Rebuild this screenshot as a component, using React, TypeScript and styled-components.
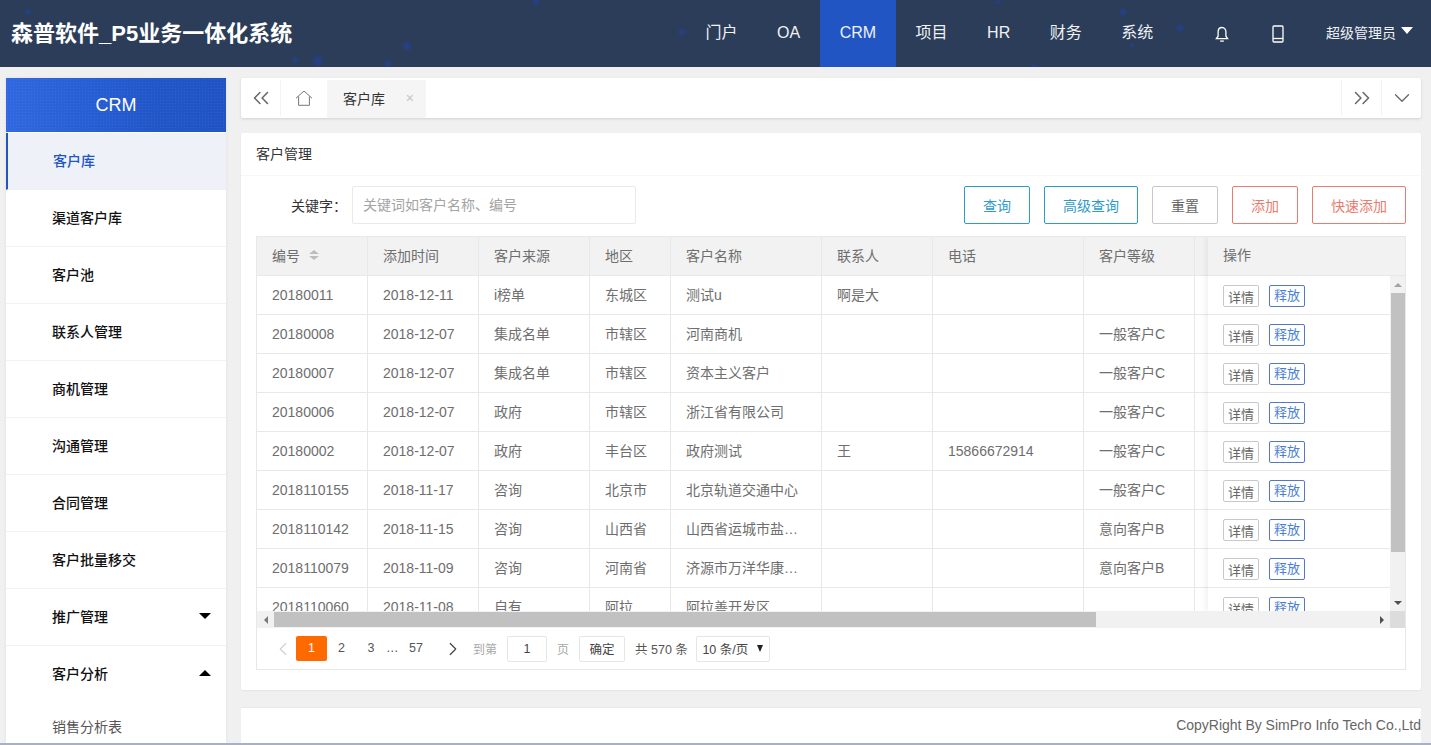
import styled, { createGlobalStyle } from "styled-components";
import { ChevronsLeft, ChevronsRight, ChevronDown, ChevronLeft, ChevronRight } from "lucide-react";

const GlobalStyle = createGlobalStyle`
    html, body {
        margin: 0;
        padding: 0;
        height: 100%;
        overflow: hidden;
    }
    * {
        box-sizing: border-box;
    }
    body {
        font-family: "Liberation Sans", "Noto Sans CJK SC", sans-serif;
        font-size: 14px;
        color: #6e6e6e;
        background: #f0f0f1;
    }
`;

const Page = styled.div`
    height: 745px;
    display: flex;
    flex-direction: column;
    overflow: hidden;
    border-bottom: 2px solid #a9b1c0;
`;

const dot = (x: number, y: number, r: number) =>
    `radial-gradient(circle ${r}px at ${x}px ${y}px, rgba(34, 66, 170, 0.75), rgba(34, 66, 170, 0) 100%)`;

const TopBar = styled.header`
    flex: none;
    height: 67px;
    display: flex;
    align-items: stretch;
    justify-content: space-between;
    background-color: #2b3d58;
    background-image: ${[
        dot(28, 12, 4),
        dot(295, 60, 4),
        dot(318, 61, 7),
        dot(388, 64, 5),
        dot(407, 46, 6),
        dot(536, 2, 5),
        dot(682, 32, 5),
        dot(998, 2, 3),
        dot(1034, 66, 4),
        dot(1123, 12, 5),
        dot(1132, 45, 3),
        dot(1180, 28, 5),
    ].join(", ")};
`;

const Brand = styled.div`
    padding-left: 11px;
    line-height: 67px;
    font-size: 22px;
    font-weight: 700;
    color: #fff;
`;

const TopNav = styled.nav`
    display: flex;
    align-items: stretch;
    color: #fff;
`;

const NavItem = styled.div<{ $active?: boolean }>`
    padding: 0 19.75px;
    line-height: 65px;
    font-size: 16px;
    color: #f0f2f5;
    background: ${(p) => (p.$active ? "#2155c3" : "transparent")};
`;

const NavIcons = styled.div`
    margin-left: 21px;
    display: flex;
`;

const NavIcon = styled.div`
    width: 56px;
    display: flex;
    align-items: center;
    justify-content: center;
    padding-top: 1px;
`;

const UserMenu = styled.div`
    display: flex;
    align-items: center;
    gap: 5px;
    padding: 0 18px 3px 20px;
    font-size: 14px;
    color: #f0f2f5;
`;

const UserCaret = styled.span`
    width: 0;
    height: 0;
    margin-bottom: 4px;
    border-left: 6.5px solid transparent;
    border-right: 6.5px solid transparent;
    border-top: 7px solid #fff;
`;

const Body = styled.div`
    flex: 1;
    min-height: 0;
    display: flex;
    gap: 15px;
    padding: 11px 10px 0 6px;
`;

const Sidebar = styled.aside`
    flex: none;
    width: 220px;
    background: #fff;
    overflow: hidden;
    box-shadow: 0 0 4px rgba(0, 0, 0, 0.06);
`;

const SideTitle = styled.div`
    height: 54px;
    margin-bottom: 1px;
    display: flex;
    align-items: center;
    justify-content: center;
    font-size: 18px;
    color: #fff;
    background-image: radial-gradient(rgba(255, 255, 255, 0.07) 0.5px, transparent 0.8px),
        linear-gradient(90deg, #2f68e0, #2156c8 70%, #2054c4);
    background-size: 3px 3px, 100% 100%;
`;

const SideItem = styled.div<{ $active?: boolean; $open?: boolean }>`
    height: 57px;
    display: flex;
    align-items: center;
    justify-content: space-between;
    padding: 0 15px 2px ${(p) => (p.$active ? "45px" : "46px")};
    font-size: 14px;
    font-weight: 500;
    color: ${(p) => (p.$active ? "#2155c3" : "#111")};
    background: ${(p) => (p.$active ? "#eef2f8" : "#fff")};
    border-left: ${(p) => (p.$active ? "2px solid #2155c3" : "none")};
    border-bottom: 1px solid ${(p) => (p.$open || p.$active ? "transparent" : "#f2f2f3")};
`;

const SideCaret = styled.span<{ $up?: boolean }>`
    width: 0;
    height: 0;
    border-left: 6px solid transparent;
    border-right: 6px solid transparent;
    border-top: ${(p) => (p.$up ? "none" : "6px solid #000")};
    border-bottom: ${(p) => (p.$up ? "6px solid #000" : "none")};
`;

const SideSubItem = styled.div`
    height: 50px;
    display: flex;
    align-items: center;
    padding: 0 0 5px 46px;
    font-size: 14px;
    color: #555;
`;

const Main = styled.main`
    flex: 1;
    min-width: 0;
    display: flex;
    flex-direction: column;
`;

const TabBar = styled.div`
    flex: none;
    height: 40px;
    display: flex;
    align-items: stretch;
    background: #fff;
    box-shadow: 0 1px 3px rgba(0, 0, 0, 0.13);
    border-radius: 2px;
`;

const TabButton = styled.div<{ $w: number; $left?: boolean; $right?: boolean }>`
    flex: none;
    width: ${(p) => p.$w}px;
    margin: 2px 0;
    display: flex;
    align-items: center;
    justify-content: center;
    color: #666;
    border-left: ${(p) => (p.$left ? "1px solid #f3f3f3" : "none")};
    border-right: ${(p) => (p.$right ? "1px solid #f3f3f3" : "none")};
`;

const Tab = styled.div`
    flex: none;
    width: 99px;
    margin: 2px 0 0 0;
    padding: 0 12px 3px 16px;
    display: flex;
    align-items: center;
    justify-content: space-between;
    background: #f5f5f6;
    font-size: 14px;
    color: #333;
`;

const TabClose = styled.span`
    font-size: 14px;
    color: #c4c4c4;
`;

const TabSpacer = styled.div`
    flex: 1;
`;

const Card = styled.section`
    flex: none;
    height: 557px;
    margin-top: 15px;
    background: #fff;
    box-shadow: 0 1px 2px rgba(0, 0, 0, 0.05);
    border-radius: 2px;
`;

const CardTitle = styled.div`
    height: 43px;
    padding: 0 15px;
    line-height: 43px;
    font-size: 14px;
    color: #333;
    border-bottom: 1px solid #f7f7f7;
`;

const CardBody = styled.div`
    padding: 10px 15px 0;
`;

const FilterRow = styled.div`
    display: flex;
    align-items: center;
    height: 38px;
`;

const FilterLabel = styled.label`
    width: 96px;
    flex: none;
    padding-right: 5px;
    text-align: right;
    font-size: 14px;
    color: #333;
`;

const SearchBox = styled.div`
    width: 284px;
    height: 38px;
    padding: 0 10px;
    line-height: 36px;
    font-size: 14px;
    color: #a4a4a4;
    border: 1px solid #e9e9e9;
    border-radius: 2px;
`;

const FilterActions = styled.div`
    margin-left: auto;
    display: flex;
    gap: 14px;
`;

const OutlineButton = styled.button<{ $tone: string; $line?: string; $w: number }>`
    width: ${(p) => p.$w}px;
    height: 38px;
    padding: 0;
    background: #fff;
    border: 1px solid ${(p) => p.$line ?? p.$tone};
    border-radius: 2px;
    font-family: inherit;
    font-size: 14px;
    color: ${(p) => p.$tone};
`;

const TableFrame = styled.div`
    margin-top: 12px;
    height: 434px;
    display: flex;
    flex-direction: column;
    border: 1px solid #e8e8ea;
`;

const Panes = styled.div`
    flex: none;
    height: 374px;
    display: flex;
    overflow: hidden;
`;

const ScrollPane = styled.div`
    flex: 1;
    min-width: 0;
    overflow: hidden;
`;

const FixedPane = styled.div`
    flex: none;
    width: 197px;
    display: flex;
    flex-direction: column;
    background: #fff;
    box-shadow: -3px 0 5px rgba(0, 0, 0, 0.05);
    position: relative;
`;

const HeadRow = styled.div`
    display: flex;
    width: max-content;
    height: 39px;
    background: #f2f2f3;
    border-bottom: 1px solid #e8e8ea;
`;

const HeadCell = styled.div<{ $w: number }>`
    flex: none;
    width: ${(p) => p.$w}px;
    padding: 0 15px 2px;
    display: flex;
    align-items: center;
    gap: 9px;
    font-size: 14px;
    color: #6e6e6e;
    border-right: 1px solid #e8e8ea;
`;

const FixedHead = styled.div`
    flex: none;
    height: 39px;
    padding: 0 15px;
    line-height: 37px;
    font-size: 14px;
    color: #6e6e6e;
    background: #f2f2f3;
    border-bottom: 1px solid #e8e8ea;
`;

const Row = styled.div`
    display: flex;
    width: max-content;
    height: 39px;
    border-bottom: 1px solid #e8e8ea;
`;

const Cell = styled.div<{ $w: number }>`
    flex: none;
    width: ${(p) => p.$w}px;
    padding: 0 15px;
    line-height: 38px;
    font-size: 14px;
    color: #6e6e6e;
    white-space: nowrap;
    overflow: hidden;
    border-right: 1px solid #e8e8ea;
`;

const FixedBody = styled.div`
    flex: 1;
    min-height: 0;
    display: flex;
`;

const ActionList = styled.div`
    flex: 1;
    min-width: 0;
`;

const ActionRow = styled.div`
    height: 39px;
    padding: 2px 15px 0;
    display: flex;
    align-items: center;
    gap: 10px;
    border-bottom: 1px solid #e8e8ea;
`;

const RowButton = styled.button<{ $primary?: boolean }>`
    width: 36px;
    height: 22px;
    padding: ${(p) => (p.$primary ? "0" : "3px 0 0")};
    background: #fff;
    border: 1px solid ${(p) => (p.$primary ? "#5577c8" : "#c9c9c9")};
    border-radius: 2px;
    font-family: inherit;
    font-size: 13px;
    line-height: 18px;
    color: ${(p) => (p.$primary ? "#4b7fd6" : "#666")};
`;

const VScroll = styled.div`
    flex: none;
    width: 15px;
    display: flex;
    flex-direction: column;
    align-items: center;
    background: #f1f1f1;
`;

const VArrow = styled.div`
    flex: none;
    height: 17px;
    display: flex;
    align-items: center;
    justify-content: center;
`;

const VThumb = styled.div`
    flex: none;
    width: 14px;
    height: 259px;
    background: #c1c1c1;
`;

const VTrack = styled.div`
    flex: 1;
`;

const Triangle = styled.span<{ $dir: "up" | "down" | "left" | "right"; $color?: string; $half?: number }>`
    width: 0;
    height: 0;
    ${(p) => {
        const c = p.$color ?? "#505050";
        const h = p.$half ?? 4;
        if (p.$dir === "up") return `border-left:${h}px solid transparent;border-right:${h}px solid transparent;border-bottom:4px solid ${c};`;
        if (p.$dir === "down") return `border-left:${h}px solid transparent;border-right:${h}px solid transparent;border-top:4px solid ${c};`;
        if (p.$dir === "left") return `border-top:${h}px solid transparent;border-bottom:${h}px solid transparent;border-right:4px solid ${c};`;
        return `border-top:${h}px solid transparent;border-bottom:${h}px solid transparent;border-left:4px solid ${c};`;
    }}
`;

const SortMark = styled.span`
    display: inline-flex;
    flex-direction: column;
    gap: 2px;
`;

const HScroll = styled.div`
    flex: none;
    height: 17px;
    display: flex;
    align-items: center;
    background: #f1f1f1;
`;

const HArrow = styled.div`
    flex: none;
    width: 17px;
    display: flex;
    justify-content: center;
`;

const HThumb = styled.div`
    flex: none;
    width: 822px;
    height: 15px;
    background: #c1c1c1;
`;

const HTrack = styled.div`
    flex: 1;
`;

const HCorner = styled.div`
    flex: none;
    width: 15px;
    height: 17px;
    background-color: #dcdcdc;
    background-image: radial-gradient(#c4c4c4 0.6px, transparent 0.7px);
    background-size: 2px 2px;
`;

const Pager = styled.div`
    flex: 1;
    display: flex;
    align-items: center;
    padding: 0 0 0 12px;
    font-size: 12.5px;
    color: #555;
`;

const PagerArrow = styled.div<{ $w: number; $muted?: boolean }>`
    flex: none;
    width: ${(p) => p.$w}px;
    display: flex;
    justify-content: center;
    color: ${(p) => (p.$muted ? "#cfcfcf" : "#444")};
`;

const PageNum = styled.div<{ $active?: boolean; $w?: number }>`
    flex: none;
    width: ${(p) => p.$w ?? 30}px;
    height: 25px;
    line-height: 24px;
    text-align: center;
    border-radius: 2px;
    color: ${(p) => (p.$active ? "#fff" : "#555")};
    background: ${(p) => (p.$active ? "#ff6a00" : "transparent")};
`;

const PagerText = styled.span<{ $muted?: boolean; $left: number }>`
    flex: none;
    margin-left: ${(p) => p.$left}px;
    white-space: nowrap;
    font-size: ${(p) => (p.$muted ? "12px" : "12.5px")};
    color: ${(p) => (p.$muted ? "#a8a8a8" : "#555")};
`;

const PagerBox = styled.div<{ $w: number; $left: number }>`
    flex: none;
    width: ${(p) => p.$w}px;
    height: 26px;
    margin-left: ${(p) => p.$left}px;
    padding: 0 8px;
    display: flex;
    align-items: center;
    justify-content: center;
    gap: 9px;
    background: #fff;
    border: 1px solid #e6e6e6;
    border-radius: 2px;
    font-size: 12.5px;
    color: #444;
    white-space: nowrap;
`;

const SmallCaret = styled.span`
    width: 0;
    height: 0;
    border-left: 3.5px solid transparent;
    border-right: 3.5px solid transparent;
    border-top: 7px solid #222;
`;

const Footer = styled.footer`
    flex: none;
    height: 36px;
    margin-top: 17px;
    line-height: 35px;
    text-align: right;
    font-size: 14px;
    color: #666;
    background: #fff;
    border-top: 1px solid #e9e9e9;
    white-space: nowrap;
`;

const menu = ["客户库", "渠道客户库", "客户池", "联系人管理", "商机管理", "沟通管理", "合同管理", "客户批量移交"];

const widths = [111, 111, 111, 81, 151, 111, 151, 111, 80];

const heads = ["编号", "添加时间", "客户来源", "地区", "客户名称", "联系人", "电话", "客户等级", ""];

const rows = [
    ["20180011", "2018-12-11", "i榜单", "东城区", "测试u", "啊是大", "", "", ""],
    ["20180008", "2018-12-07", "集成名单", "市辖区", "河南商机", "", "", "一般客户C", ""],
    ["20180007", "2018-12-07", "集成名单", "市辖区", "资本主义客户", "", "", "一般客户C", ""],
    ["20180006", "2018-12-07", "政府", "市辖区", "浙江省有限公司", "", "", "一般客户C", ""],
    ["20180002", "2018-12-07", "政府", "丰台区", "政府测试", "王", "15866672914", "一般客户C", ""],
    ["2018110155", "2018-11-17", "咨询", "北京市", "北京轨道交通中心", "", "", "一般客户C", ""],
    ["2018110142", "2018-11-15", "咨询", "山西省", "山西省运城市盐…", "", "", "意向客户B", ""],
    ["2018110079", "2018-11-09", "咨询", "河南省", "济源市万洋华康…", "", "", "意向客户B", ""],
    ["2018110060", "2018-11-08", "自有", "阿拉", "阿拉善开发区", "", "", "", ""],
];

function BellIcon() {
    return (
        <svg width="14" height="17" viewBox="0 0 14 17" fill="none" stroke="#fff" strokeWidth="1.3">
            <path d="M7 1.5c-2.6 0-3.9 2-3.9 4.5v4.2L1.4 12.6h11.2l-1.7-2.4V6c0-2.5-1.3-4.5-3.9-4.5z" />
            <path d="M5.4 14.6c.4.7 2.8.7 3.2 0" />
        </svg>
    );
}

function PhoneIcon() {
    return (
        <svg width="12" height="18" viewBox="0 0 12 18" fill="none" stroke="#fff" strokeWidth="1.3">
            <rect x="1" y="1" width="10" height="16" rx="1" />
            <path d="M1 13.5h10" />
        </svg>
    );
}

function HomeIcon() {
    return (
        <svg width="18" height="16" viewBox="0 0 18 16" fill="none" stroke="#777" strokeWidth="1">
            <path d="M1 8.2 9 1l8 7.2" />
            <path d="M3.6 6.4v8.9h10.8V6.4" />
        </svg>
    );
}

export default function App() {
    return (
        <Page>
            <GlobalStyle />
            <TopBar>
                <Brand>森普软件_P5业务一体化系统</Brand>
                <TopNav>
                    <NavItem>门户</NavItem>
                    <NavItem>OA</NavItem>
                    <NavItem $active>CRM</NavItem>
                    <NavItem>项目</NavItem>
                    <NavItem>HR</NavItem>
                    <NavItem>财务</NavItem>
                    <NavItem>系统</NavItem>
                    <NavIcons>
                        <NavIcon><BellIcon /></NavIcon>
                        <NavIcon><PhoneIcon /></NavIcon>
                    </NavIcons>
                    <UserMenu>超级管理员<UserCaret /></UserMenu>
                </TopNav>
            </TopBar>
            <Body>
                <Sidebar>
                    <SideTitle>CRM</SideTitle>
                    {menu.map((m, i) => (
                        <SideItem key={m} $active={i === 0}>{m}</SideItem>
                    ))}
                    <SideItem>推广管理<SideCaret /></SideItem>
                    <SideItem $open>客户分析<SideCaret $up /></SideItem>
                    <SideSubItem>销售分析表</SideSubItem>
                </Sidebar>
                <Main>
                    <TabBar>
                        <TabButton $w={40} $right><ChevronsLeft size={26} strokeWidth={1.4} /></TabButton>
                        <TabButton $w={46}><HomeIcon /></TabButton>
                        <Tab>客户库<TabClose>×</TabClose></Tab>
                        <TabSpacer />
                        <TabButton $w={40} $left><ChevronsRight size={26} strokeWidth={1.4} /></TabButton>
                        <TabButton $w={40} $left><ChevronDown size={26} strokeWidth={1.2} /></TabButton>
                    </TabBar>
                    <Card>
                        <CardTitle>客户管理</CardTitle>
                        <CardBody>
                            <FilterRow>
                                <FilterLabel>关键字：</FilterLabel>
                                <SearchBox>关键词如客户名称、编号</SearchBox>
                                <FilterActions>
                                    <OutlineButton $tone="#2f9bc9" $w={66}>查询</OutlineButton>
                                    <OutlineButton $tone="#2f9bc9" $w={94}>高级查询</OutlineButton>
                                    <OutlineButton $tone="#666666" $line="#c8c8c8" $w={66}>重置</OutlineButton>
                                    <OutlineButton $tone="#ea7c6e" $w={66}>添加</OutlineButton>
                                    <OutlineButton $tone="#ea7c6e" $w={94}>快速添加</OutlineButton>
                                </FilterActions>
                            </FilterRow>
                            <TableFrame>
                                <Panes>
                                    <ScrollPane>
                                        <HeadRow>
                                            {heads.map((h, i) => (
                                                <HeadCell key={i} $w={widths[i]}>
                                                    {h}
                                                    {i === 0 && (
                                                        <SortMark>
                                                            <Triangle $dir="up" $color="#bdbdbd" $half={5} />
                                                            <Triangle $dir="down" $color="#bdbdbd" $half={5} />
                                                        </SortMark>
                                                    )}
                                                </HeadCell>
                                            ))}
                                        </HeadRow>
                                        {rows.map((r) => (
                                            <Row key={r[0]}>
                                                {r.map((c, i) => (
                                                    <Cell key={i} $w={widths[i]}>{c}</Cell>
                                                ))}
                                            </Row>
                                        ))}
                                    </ScrollPane>
                                    <FixedPane>
                                        <FixedHead>操作</FixedHead>
                                        <FixedBody>
                                            <ActionList>
                                                {rows.map((r) => (
                                                    <ActionRow key={r[0]}>
                                                        <RowButton>详情</RowButton>
                                                        <RowButton $primary>释放</RowButton>
                                                    </ActionRow>
                                                ))}
                                            </ActionList>
                                            <VScroll>
                                                <VArrow><Triangle $dir="up" $color="#a3a3a3" /></VArrow>
                                                <VThumb />
                                                <VTrack />
                                                <VArrow><Triangle $dir="down" /></VArrow>
                                            </VScroll>
                                        </FixedBody>
                                    </FixedPane>
                                </Panes>
                                <HScroll>
                                    <HArrow><Triangle $dir="left" $color="#7a7a7a" /></HArrow>
                                    <HThumb />
                                    <HTrack />
                                    <HArrow><Triangle $dir="right" /></HArrow>
                                    <HCorner />
                                </HScroll>
                                <Pager>
                                    <PagerArrow $w={27} $muted><ChevronLeft size={22} strokeWidth={1.2} /></PagerArrow>
                                    <PageNum $active $w={31}>1</PageNum>
                                    <PageNum $w={29}>2</PageNum>
                                    <PageNum>3</PageNum>
                                    <PageNum $w={12}>…</PageNum>
                                    <PageNum $w={36}>57</PageNum>
                                    <PagerArrow $w={38}><ChevronRight size={22} strokeWidth={1.3} /></PagerArrow>
                                    <PagerText $muted $left={1}>到第</PagerText>
                                    <PagerBox $w={40} $left={10}>1</PagerBox>
                                    <PagerText $muted $left={10}>页</PagerText>
                                    <PagerBox $w={46} $left={10}>确定</PagerBox>
                                    <PagerText $left={10}>共 570 条</PagerText>
                                    <PagerBox $w={74} $left={8}>10 条/页<SmallCaret /></PagerBox>
                                </Pager>
                            </TableFrame>
                        </CardBody>
                    </Card>
                    <Footer>CopyRight By SimPro Info Tech Co.,Ltd</Footer>
                </Main>
            </Body>
        </Page>
    );
}
